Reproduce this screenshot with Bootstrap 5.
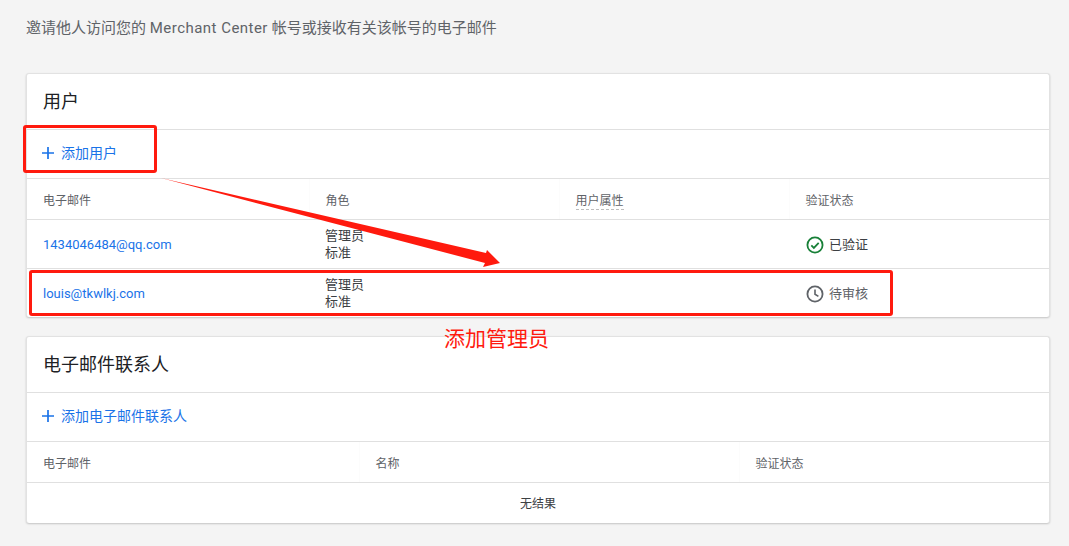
<!DOCTYPE html>
<html lang="zh-CN">
<head>
    <meta charset="UTF-8">
    <meta name="viewport" content="width=device-width, initial-scale=1.0">
    <title>Merchant Center - 用户</title>
    <link href="https://cdn.jsdelivr.net/npm/bootstrap@5.3.2/dist/css/bootstrap.min.css" rel="stylesheet">
    <style>
        body {
            background: #f4f4f4;
            font-family: Roboto, "Noto Sans CJK SC", sans-serif;
            color: #3c4043;
            overflow: hidden;
        }
        .page-wrap {
            position: relative;
            height: 546px;
            padding: 18px 19px 0 26px;
        }
        .intro-text {
            font-size: 15px;
            line-height: 20px;
            color: #5f6368;
            margin: 0 0 35px 0;
        }
        .intro-latin { letter-spacing: .47px; }
        .panel {
            border: 1px solid #e2e2e2;
            border-bottom: 0;
            border-radius: 3px;
            box-shadow: 0 1px 2px rgba(0, 0, 0, .2);
            margin-bottom: 19px;
            background: #fff;
        }
        .panel-title {
            height: 56px;
            padding: 0 16px;
            font-size: 18px;
            color: #202124;
            border-bottom: 1px solid #e0e0e0;
        }
        .add-row {
            height: 49px;
            padding: 0 15px 2px;
            border-bottom: 1px solid #e0e0e0;
            font-size: 14px;
            color: #1a73e8;
        }
        .add-row svg { margin-right: 7px; }
        .data-table {
            table-layout: fixed;
            margin: 0;
            width: 100%;
        }
        .data-table th, .data-table td {
            padding: 0 16px;
            vertical-align: middle;
            border-bottom: 1px solid #e0e0e0;
            box-shadow: none;
        }
        .data-table th {
            height: 40px;
            padding-top: 4px;
            font-size: 12px;
            font-weight: 400;
            color: #5f6368;
            border-right: 1px solid #fcfcfc;
        }
        .data-table th:last-child { border-right: 0; }
        .data-table td {
            height: 49px;
            font-size: 13px;
            line-height: 17px;
            color: #3c4043;
        }
        .data-table td.cell-low { padding-top: 2px; }
        .data-table tr:last-child td { border-bottom: 0; }
        .data-table td.no-results {
            height: 41px;
            padding-top: 3px;
            font-size: 12px;
            text-align: center;
        }
        .mail-link {
            color: #1a73e8;
            text-decoration: none;
        }
        .dashed-label { border-bottom: 1px dashed #bdbdbd; padding-bottom: 1px; }
        .state-ok, .state-wait { display: flex; align-items: center; gap: 5px; }
        .state-ok svg, .state-wait svg { margin-left: 1px; }
        .state-wait { color: #5f6368; }
        .mark-box {
            position: absolute;
            border: 3px solid #ff1a0e;
            border-radius: 3px;
        }
        .mark-add { left: 23px; top: 125px; width: 134px; height: 48px; }
        .mark-row { left: 29px; top: 270px; width: 864px; height: 46px; }
        .mark-arrow { position: absolute; left: 0; top: 0; }
        .mark-note {
            position: absolute;
            left: 444px;
            top: 325px;
            font-size: 21px;
            line-height: 28px;
            color: #ff1a0e;
        }
    </style>
</head>
<body>
    <div class="page-wrap">
        <p class="intro-text">邀请他人访问您的 <span class="intro-latin">Merchant Center</span> 帐号或接收有关该帐号的电子邮件</p>

        <!-- 用户 -->
        <div class="panel">
            <div class="panel-title d-flex align-items-center">用户</div>
            <div class="add-row d-flex align-items-center">
                <svg width="12" height="12" viewBox="0 0 12 12"><path d="M6 0v12M0 6h12" stroke="#1a73e8" stroke-width="1.7" fill="none"/></svg>
                <span>添加用户</span>
            </div>
            <table class="table data-table">
                <colgroup>
                    <col style="width:282px"><col style="width:250px"><col style="width:230px"><col>
                </colgroup>
                <thead>
                    <tr>
                        <th>电子邮件</th>
                        <th>角色</th>
                        <th><span class="dashed-label">用户属性</span></th>
                        <th>验证状态</th>
                    </tr>
                </thead>
                <tbody>
                    <tr>
                        <td class="cell-low"><a class="mail-link" href="#">1434046484@qq.com</a></td>
                        <td>管理员<br>标准</td>
                        <td></td>
                        <td class="cell-low">
                            <div class="state-ok">
                                <svg width="18" height="18" viewBox="0 0 19 19"><circle cx="9.5" cy="9.5" r="8" stroke="#188038" stroke-width="1.9" fill="none"/><path d="M5.6 9.8l2.7 2.7 5.1-5.3" stroke="#188038" stroke-width="1.9" fill="none"/></svg>
                                <span>已验证</span>
                            </div>
                        </td>
                    </tr>
                    <tr>
                        <td class="cell-low"><a class="mail-link" href="#">louis@tkwlkj.com</a></td>
                        <td>管理员<br>标准</td>
                        <td></td>
                        <td class="cell-low">
                            <div class="state-wait">
                                <svg width="18" height="18" viewBox="0 0 19 19"><circle cx="9.5" cy="9.5" r="8" stroke="#5f6368" stroke-width="1.9" fill="none"/><path d="M9.5 4.8v5l3.6 2.2" stroke="#5f6368" stroke-width="1.7" fill="none"/></svg>
                                <span>待审核</span>
                            </div>
                        </td>
                    </tr>
                </tbody>
            </table>
        </div>

        <!-- 电子邮件联系人 -->
        <div class="panel">
            <div class="panel-title d-flex align-items-center">电子邮件联系人</div>
            <div class="add-row d-flex align-items-center">
                <svg width="12" height="12" viewBox="0 0 12 12"><path d="M6 0v12M0 6h12" stroke="#1a73e8" stroke-width="1.7" fill="none"/></svg>
                <span>添加电子邮件联系人</span>
            </div>
            <table class="table data-table">
                <colgroup>
                    <col style="width:332px"><col style="width:380px"><col>
                </colgroup>
                <thead>
                    <tr>
                        <th>电子邮件</th>
                        <th>名称</th>
                        <th>验证状态</th>
                    </tr>
                </thead>
                <tbody>
                    <tr><td class="no-results" colspan="3">无结果</td></tr>
                </tbody>
            </table>
        </div>

        <!-- red annotations on top of the page -->
        <div class="mark-box mark-add"></div>
        <div class="mark-box mark-row"></div>
        <svg class="mark-arrow" width="1069" height="546" viewBox="0 0 1069 546">
            <path d="M161 178L486 253 487 250 500 263 483 267 485 263Z" fill="#ff1a0e"/>
        </svg>
        <div class="mark-note">添加管理员</div>
    </div>
    <script src="https://cdn.jsdelivr.net/npm/bootstrap@5.3.2/dist/js/bootstrap.bundle.min.js"></script>
</body>
</html>
